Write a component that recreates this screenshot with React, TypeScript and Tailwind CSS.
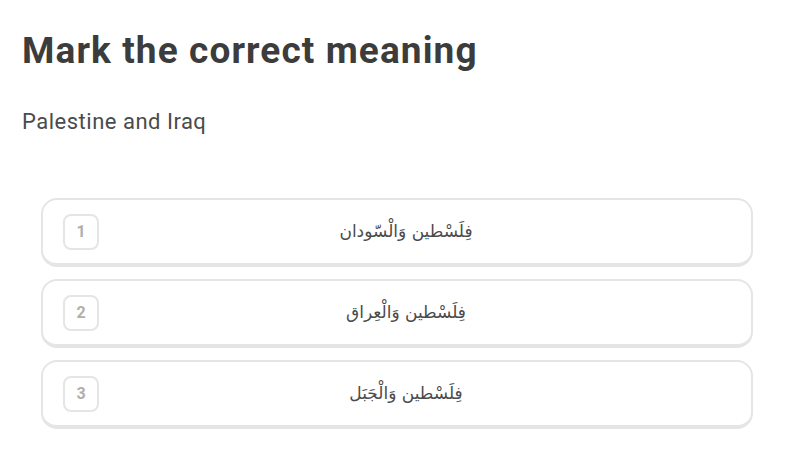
const options = [
  { id: 1, text: 'فِلَسْطين وَالْسّودان' },
  { id: 2, text: 'فِلَسْطين وَالْعِراق' },
  { id: 3, text: 'فِلَسْطين وَالْجَبَل' },
];

export default function App() {
  return (
    <div className="min-h-screen bg-white px-[22px] pt-[29px] font-['Roboto',sans-serif]">
      <h1 className="text-[37px] font-bold leading-[44px] tracking-[1.1px] text-[#3c3c3c]">
        Mark the correct meaning
      </h1>
      <p className="mt-[35px] text-[22px] leading-[28px] tracking-[0.5px] text-[#4b4b4b]">
        Palestine and Iraq
      </p>

      <div className="ml-[19px] mt-[62px] flex w-[712px] flex-col gap-[12px]">
        {options.map((option) => (
          <button
            key={option.id}
            className="relative flex h-[69px] w-full items-center rounded-[16px] border-2 border-b-4 border-[#e5e5e5] bg-white px-[20px]"
          >
            <span className="flex h-[36px] w-[36px] shrink-0 items-center justify-center rounded-[8px] border-2 border-[#e5e5e5] text-[16px] font-bold text-[#afafaf]">
              {option.id}
            </span>
            <span
              dir="rtl"
              className="flex-1 pr-[18px] text-center font-['DejaVu_Sans',sans-serif] text-[17px] text-[#4b4b4b]"
            >
              {option.text}
            </span>
          </button>
        ))}
      </div>
    </div>
  );
}
